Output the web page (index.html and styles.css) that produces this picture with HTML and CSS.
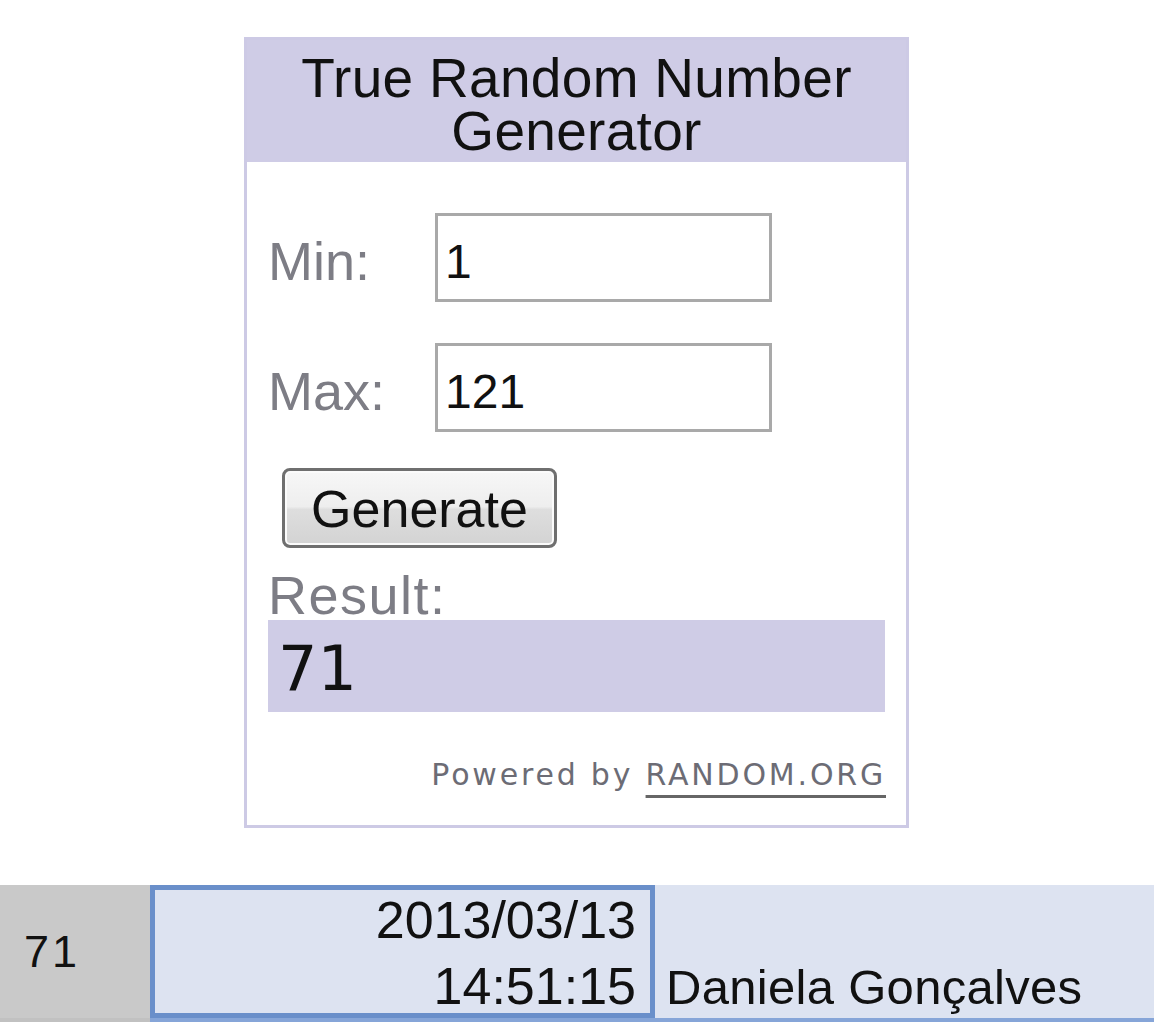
FILE: index.html
```
<!DOCTYPE html>
<html>
<head>
<meta charset="utf-8">
<link rel="stylesheet" href="styles.css">
</head>
<body>
<div class="widget">
  <div class="header">
    <div class="title-line">True Random Number</div>
    <div class="title-line">Generator</div>
  </div>
  <div class="content">
    <div class="row first">
      <div class="label">Min:</div>
      <div class="field">1</div>
    </div>
    <div class="row second">
      <div class="label">Max:</div>
      <div class="field">121</div>
    </div>
    <div class="button"><span class="btn-text">Generate</span></div>
    <div class="result-label">Result:</div>
    <div class="result">71</div>
    <div class="powered">Powered by <span class="link">RANDOM.ORG</span></div>
  </div>
</div>
<div class="sheet">
  <div class="cells">
    <div class="cell num">71</div>
    <div class="cell date">
      <div class="d1">2013/03/13</div>
      <div class="d2">14:51:15</div>
    </div>
    <div class="cell name">Daniela Gonçalves</div>
  </div>
  <div class="strip">
    <div class="strip-grey"></div>
    <div class="strip-blue"></div>
  </div>
</div>
</body>
</html>
```
FILE: styles.css
```
html, body {
  margin: 0;
  padding: 0;
  background: #ffffff;
}
body {
  font-family: "Liberation Sans", Arial, sans-serif;
  width: 1154px;
  height: 1022px;
  overflow: hidden;
}
.widget {
  margin: 37px 0 0 244px;
  width: 665px;
  box-sizing: border-box;
  border: 3px solid #cdcae5;
  background: #ffffff;
}
.header {
  background: #cfcce6;
  color: #111111;
  text-align: center;
  font-size: 55px;
  padding: 12px 0 4px 0;
}
.title-line {
  line-height: 53px;
  letter-spacing: 0.3px;
}
.content {
  padding: 0 21px 35px 21px;
  display: flex;
  flex-direction: column;
}
.row {
  display: flex;
  align-items: center;
  height: 89px;
}
.row.first { margin-top: 51px; }
.row.second { margin-top: 41px; }
.label {
  width: 167px;
  padding-top: 8px;
  font-size: 54px;
  line-height: 53px;
  color: #7d7d85;
  box-sizing: border-box;
}
.field {
  width: 337px;
  height: 89px;
  box-sizing: border-box;
  border: 3px solid #a9a9a9;
  font-size: 48px;
  line-height: 60px;
  padding: 16px 0 7px 7px;
  color: #111111;
}
.button {
  margin: 36px 0 0 14px;
  width: 275px;
  height: 80px;
  box-sizing: border-box;
  border: 3px solid #6f6f6f;
  border-radius: 8px;
  background: linear-gradient(#f7f7f7 0%, #eeeeee 48%, #dedede 52%, #d3d3d3 100%);
  box-shadow: inset 0 0 0 2px #fbfbfb;
  text-align: center;
  padding-top: 2px;
}
.btn-text {
  font-size: 52px;
  line-height: 72px;
  color: #111111;
}
.result-label {
  margin-top: 22px;
  font-size: 54px;
  letter-spacing: 1.5px;
  line-height: 50px;
  color: #7d7d85;
}
.result {
  height: 92px;
  box-sizing: border-box;
  background: #cfcce6;
  font-family: "DejaVu Sans", Verdana, sans-serif;
  font-size: 62px;
  line-height: 86px;
  padding: 6px 0 0 10px;
  color: #111111;
}
.powered {
  margin-top: 48px;
  text-align: right;
  font-family: "DejaVu Sans", Verdana, sans-serif;
  font-size: 30px;
  line-height: 30px;
  letter-spacing: 2.8px;
  color: #6c6c75;
  margin-right: -1px;
}
.link {
  text-decoration: underline;
  text-decoration-thickness: 3px;
  text-underline-offset: 10px;
  text-decoration-color: #666666;
}
.sheet {
  margin-top: 57px;
}
.cells {
  display: flex;
  height: 133px;
}
.cell {
  box-sizing: border-box;
  color: #111111;
}
.num {
  width: 150px;
  background: #c9c9c9;
  display: flex;
  align-items: center;
  padding-left: 24px;
  font-size: 45px;
  letter-spacing: 3px;
  padding-top: 1px;
}
.date {
  width: 505px;
  background: #dde3f1;
  border: 5px solid #6a8fca;
  text-align: right;
  padding-right: 14px;
  font-size: 52px;
}
.d1 { line-height: 60px; }
.d2 { line-height: 72px; }
.name {
  flex: 1;
  background: #dde3f1;
  font-size: 49px;
  line-height: 48px;
  padding: 78px 0 0 11px;
  letter-spacing: 0.3px;
}
.strip {
  display: flex;
  height: 4px;
}
.strip-grey {
  width: 150px;
  background: #c1c1c1;
}
.strip-blue {
  flex: 1;
  background: #86a5d8;
}
```
